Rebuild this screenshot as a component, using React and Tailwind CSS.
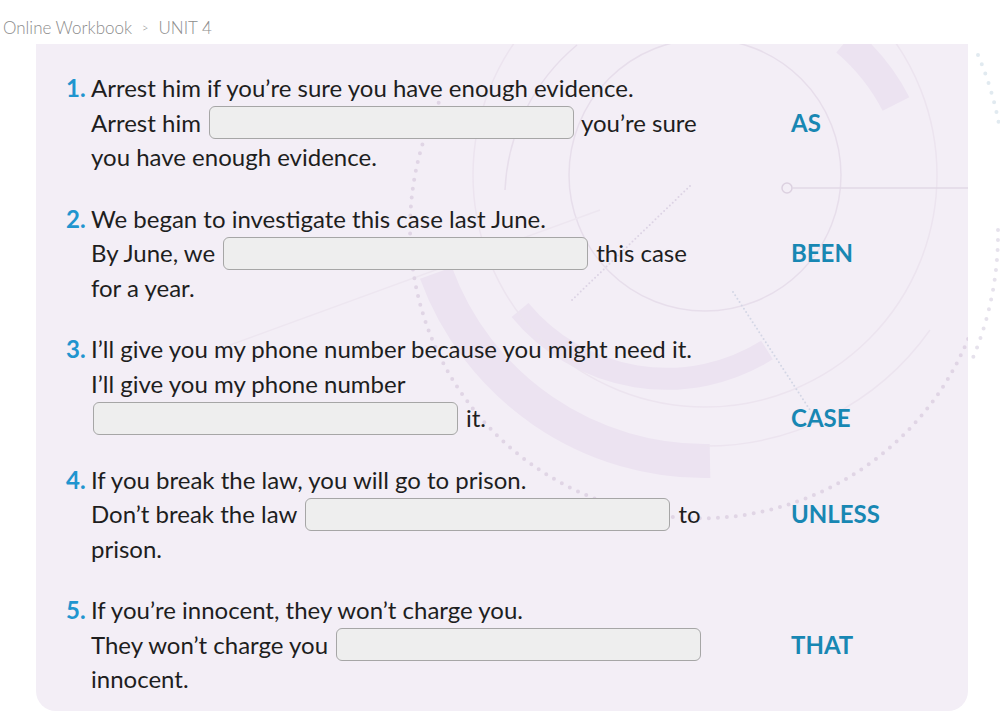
import React from "react";

const KW = "font-bold text-[#1887b3]";

function Blank({ className = "" }) {
  return (
    <span
      className={
        "inline-block w-[365px] h-[33px] rounded-[6px] border border-[#a6a6a6] bg-[#eeeeee] shrink-0 " +
        className
      }
    />
  );
}

function Line({ num, children, keyword }) {
  return (
    <div className="grid grid-cols-[25px_700px_1fr] h-[34.5px] items-center">
      <span className="font-bold text-[#1f95cf]">{num}</span>
      <div className="flex items-center whitespace-nowrap">{children}</div>
      <span className={KW}>{keyword}</span>
    </div>
  );
}

function Decoration() {
  const line = "#e7deeb";
  const band = "#ece3f1";
  return (
    <svg
      className="absolute left-[-36px] top-[-44px] w-[1000px] h-[719px] pointer-events-none"
      viewBox="0 0 1000 719"
      fill="none"
    >
      {/* thick bands */}
      <path d="M 710 461 A 286 286 0 0 1 436 273" stroke={band} strokeWidth="34" />
      <path d="M 767 350 A 190 190 0 0 1 520 310" stroke={band} strokeWidth="22" />
      <path d="M 846 41 A 205 205 0 0 1 896 104" stroke={band} strokeWidth="30" />
      {/* thin circles */}
      <circle cx="705" cy="175" r="136" stroke={line} strokeWidth="1.5" />
      <circle cx="705" cy="175" r="232" stroke="#ece4ef" strokeWidth="1.5" />
      <path d="M 700 446 A 275 275 0 0 0 930 330" stroke="#ece4ef" strokeWidth="1.5" />
      <path d="M 577 45 A 200 200 0 0 0 505 190" stroke={line} strokeWidth="1.5" />
      {/* node and line */}
      <circle cx="787" cy="188" r="5" stroke="#dcd1e0" strokeWidth="1.5" />
      <line x1="792" y1="188" x2="1000" y2="188" stroke="#e2d8e6" strokeWidth="1.5" />
      {/* straight faint line */}
      <line x1="230" y1="345" x2="600" y2="210" stroke="#ede6f0" strokeWidth="1.5" />
      {/* dotted big circle */}
      <path
        d="M 986 180 A 290 290 0 1 1 440 100"
        stroke="#e0d5e5"
        strokeWidth="4"
        strokeLinecap="round"
        strokeDasharray="0 9"
      />
      {/* radial dotted lines */}
      <line x1="690" y1="186" x2="572" y2="300" stroke="#dcd3e4" strokeWidth="2" strokeLinecap="round" strokeDasharray="0 4" />
      <line x1="733" y1="292" x2="810" y2="410" stroke="#d3d6e5" strokeWidth="2" strokeLinecap="round" strokeDasharray="0 4" />
    </svg>
  );
}

function OuterDots() {
  return (
    <svg
      className="absolute left-0 top-0 w-[1000px] h-[719px] pointer-events-none"
      viewBox="0 0 1000 719"
      fill="none"
    >
      <path
        d="M 978 55 A 330 330 0 0 1 1000 130"
        stroke="#e1eaf0"
        strokeWidth="4"
        strokeLinecap="round"
        strokeDasharray="0 10"
      />
      <path
        d="M 998 230 A 320 320 0 0 1 972 360"
        stroke="#e6e2ec"
        strokeWidth="4"
        strokeLinecap="round"
        strokeDasharray="0 10"
      />
    </svg>
  );
}

export default function App() {
  return (
    <div className="relative w-[1000px] h-[719px] bg-white overflow-hidden font-[Lato,sans-serif] text-[#1e1e1e]">
      <OuterDots />
      <div className="relative h-[44px] pt-[18px] pl-[3px] text-[17px] leading-[20px] font-light text-[#8c8c8c] flex items-start gap-[10px]">
        <span>Online Workbook</span>
        <span className="text-[11px] leading-[20px]">&gt;</span>
        <span>UNIT 4</span>
      </div>
      <div className="relative ml-[36px] w-[932px] h-[667px] bg-[#f3eef6] rounded-b-[20px] overflow-hidden">
        <Decoration />
        <div className="relative pl-[30px] pt-[26px] text-[24px] flex flex-col gap-[27px]">
          <div>
            <Line num="1.">Arrest him if you’re sure you have enough evidence.</Line>
            <Line keyword="AS">
              Arrest him <Blank className="ml-[8px] mr-[7px]" /> you’re sure
            </Line>
            <Line>you have enough evidence.</Line>
          </div>
          <div>
            <Line num="2.">We began to investigate this case last June.</Line>
            <Line keyword="BEEN">
              By June, we <Blank className="ml-[8px] mr-[8px]" /> this case
            </Line>
            <Line>for a year.</Line>
          </div>
          <div>
            <Line num="3.">I’ll give you my phone number because you might need it.</Line>
            <Line>I’ll give you my phone number</Line>
            <Line keyword="CASE">
              <Blank className="ml-[2px] mr-[8px]" /> it.
            </Line>
          </div>
          <div>
            <Line num="4.">If you break the law, you will go to prison.</Line>
            <Line keyword="UNLESS">
              Don’t break the law <Blank className="ml-[8px] mr-[8px]" /> to
            </Line>
            <Line>prison.</Line>
          </div>
          <div>
            <Line num="5.">If you’re innocent, they won’t charge you.</Line>
            <Line keyword="THAT">
              They won’t charge you <Blank className="ml-[8px] mr-[8px]" />
            </Line>
            <Line>innocent.</Line>
          </div>
        </div>
      </div>
    </div>
  );
}
